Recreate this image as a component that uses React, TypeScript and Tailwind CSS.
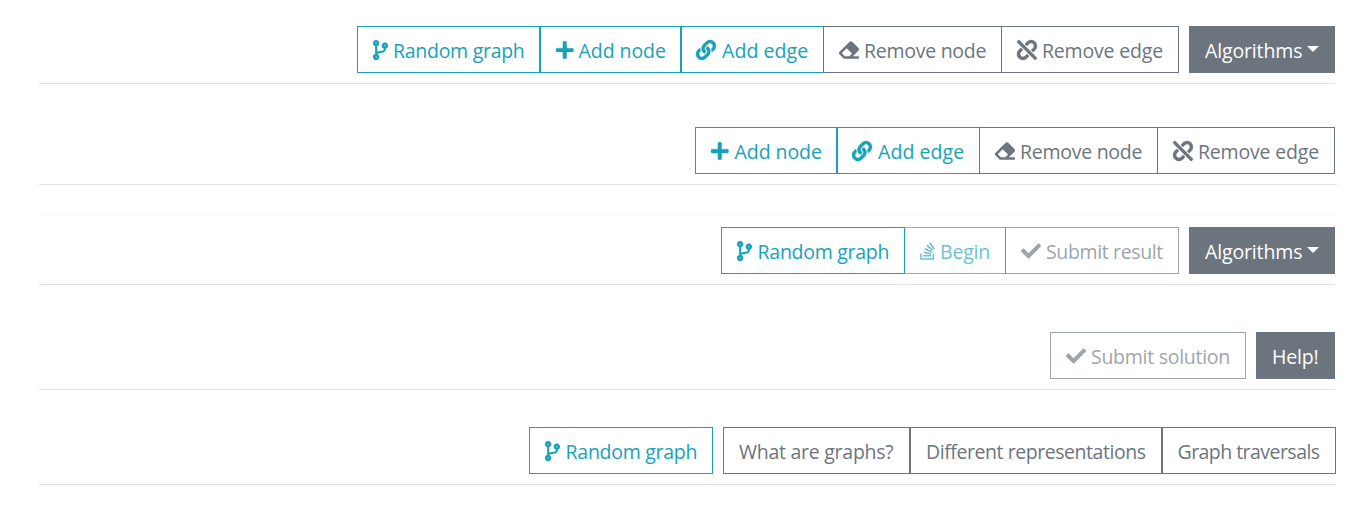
import type { ReactNode } from "react";
import { FaCheck, FaCodeBranch, FaEraser, FaLink, FaPlus, FaStackOverflow, FaUnlink } from "react-icons/fa";

type ButtonProps = {
  className: string;
  icon?: ReactNode;
  label: string;
  textClass?: string;
  caret?: boolean;
};

const info = "border border-[#17a2b8] text-[#17a2b8]";
const gray = "border border-[#6c757d] text-[#6c757d]";
const solid = "border border-[#6c757d] bg-[#6c757d] text-white";

const branch = <FaCodeBranch className="h-5 w-[15px] overflow-visible stroke-[5]" />;
const plus = <FaPlus className="h-5 w-[17.5px] overflow-visible stroke-[8]" />;
const link = <FaLink className="mr-px -ml-px size-5 overflow-visible stroke-[8]" />;
const eraser = <FaEraser className="size-5" />;
const unlink = <FaUnlink className="size-5 overflow-visible stroke-[8]" />;
const check = <FaCheck className="size-5" />;
const stack = <FaStackOverflow className="h-5 w-[15px]" />;

function Button({ className, icon, label, textClass = "", caret }: ButtonProps) {
  return (
    <button className={`flex h-[47px] shrink-0 items-center pl-[15px] whitespace-nowrap ${className}`}>
      {icon && <span className="mt-px mr-[5.5px] -ml-[0.5px] shrink-0">{icon}</span>}
      <span className={`mt-[3px] text-[19.5px] leading-[30px] ${textClass}`}>{label}</span>
      {caret && (
        <span className="mb-px ml-[4.5px] border-x-6 border-t-6 border-x-transparent border-t-white" />
      )}
    </button>
  );
}

function Row({ className, children }: { className: string; children: ReactNode }) {
  return <div className={`flex h-[58px] justify-end border-b pb-[10px] ${className}`}>{children}</div>;
}

export default function App() {
  return (
    <main className="h-[507px] w-[1358px] overflow-hidden bg-white pt-[26px] pl-[39px] font-['Open_Sans','Noto_Sans',sans-serif]">
      <Row className="w-[1296px] border-[#dee2e6]">
        <Button className={`w-[183px] ${info}`} icon={branch} label="Random graph" textClass="tracking-[-0.28px]" />
        <Button className={`w-[141px] ${info}`} icon={plus} label="Add node" textClass="tracking-[-0.06px]" />
        <Button className={`w-[143px] ${info}`} icon={link} label="Add edge" textClass="tracking-[0.08px]" />
        <Button className={`-ml-px w-[179px] ${gray}`} icon={eraser} label="Remove node" textClass="tracking-[-0.27px]" />
        <Button className={`-ml-px w-[178px] ${gray}`} icon={unlink} label="Remove edge" textClass="tracking-[-0.18px]" />
        <Button className={`ml-[10px] w-[146px] ${solid}`} label="Algorithms" caret textClass="tracking-[-0.14px]" />
      </Row>
      <Row className="mt-[43px] w-[1298px] border-[#dee2e6] pr-[2px]">
        <Button className={`w-[142px] ${info}`} icon={plus} label="Add node" textClass="ml-px tracking-[-0.06px]" />
        <Button className={`w-[143px] ${info}`} icon={link} label="Add edge" textClass="tracking-[0.08px]" />
        <Button className={`-ml-px w-[179px] ${gray}`} icon={eraser} label="Remove node" textClass="tracking-[-0.27px]" />
        <Button className={`-ml-px w-[178px] ${gray}`} icon={unlink} label="Remove edge" textClass="tracking-[-0.18px]" />
      </Row>
      <div className="mt-[30px] h-px w-[1296px] bg-[#fafafa]" />
      <Row className="mt-[11px] w-[1296px] border-[#dee2e6]">
        <Button className={`w-[184px] ${info}`} icon={branch} label="Random graph" textClass="ml-[0.6px] tracking-[-0.28px]" />
        <Button className={`-ml-px w-[102px] opacity-65 ${info}`} icon={stack} label="Begin" textClass="tracking-[-0.2px]" />
        <Button className={`-ml-px w-[174px] opacity-65 ${gray}`} icon={check} label="Submit result" textClass="tracking-[-0.36px]" />
        <Button className={`ml-[10px] w-[146px] ${solid}`} label="Algorithms" caret textClass="tracking-[-0.14px]" />
      </Row>
      <Row className="mt-[47px] w-[1296px] border-[#dee2e6]">
        <Button className={`w-[196px] opacity-65 ${gray}`} icon={check} label="Submit solution" textClass="tracking-[-0.27px]" />
        <Button className={`ml-[10px] w-[79px] ${solid}`} label="Help!" textClass="tracking-[-0.2px]" />
      </Row>
      <Row className="mt-[37px] w-[1297px] border-[#dee2e6]">
        <Button className={`w-[184px] ${info}`} icon={branch} label="Random graph" textClass="ml-[0.6px] tracking-[-0.28px]" />
        <Button className={`ml-[10px] w-[187px] ${gray}`} label="What are graphs?" textClass="tracking-[-0.26px]" />
        <Button className={`w-[252px] ${gray}`} label="Different representations" textClass="tracking-[-0.44px]" />
        <Button className={`w-[174px] ${gray}`} label="Graph traversals" textClass="-ml-[0.5px] tracking-[-0.54px]" />
      </Row>
    </main>
  );
}
